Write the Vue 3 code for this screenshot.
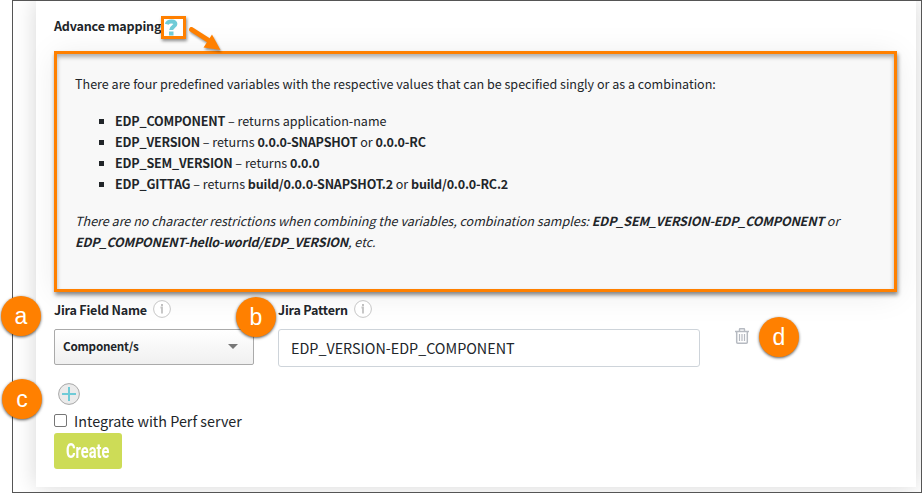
<script setup>
const variables = [
  { name: 'EDP_COMPONENT', parts: [{ text: 'application-name' }] },
  { name: 'EDP_VERSION', parts: [{ text: '0.0.0-SNAPSHOT', bold: true }, { text: ' or ' }, { text: '0.0.0-RC', bold: true }] },
  { name: 'EDP_SEM_VERSION', parts: [{ text: '0.0.0', bold: true }] },
  { name: 'EDP_GITTAG', parts: [{ text: 'build/0.0.0-SNAPSHOT.2', bold: true }, { text: ' or ' }, { text: 'build/0.0.0-RC.2', bold: true }] },
]
const markers = ['a', 'b', 'c', 'd']
</script>

<template>
  <div class="frame">
    <main class="panel">
      <header class="heading">
        <span class="title">Advance mapping</span>
        <span class="help">
          <svg width="19" height="17" viewBox="0 0 19 17">
            <path d="M1.800 5.200C2.300 3 4 2.400 6.500 2.400c2.700 0 3.900 1.100 3.900 2.700 0 2.700-4.200 2.500-4.200 6" fill="none" stroke="#6fcbd7" stroke-width="4" />
            <rect x="4" y="12.500" width="4.500" height="4" fill="#6fcbd7" />
          </svg>
        </span>
      </header>

      <section class="callout">
        <p class="intro">There are four predefined variables with the respective values that can be specified singly or as a combination:</p>
        <ul class="vars">
          <li v-for="v in variables" :key="v.name"><b>{{ v.name }}</b> – returns <template v-for="(p, i) in v.parts" :key="i"><b v-if="p.bold">{{ p.text }}</b><template v-else>{{ p.text }}</template></template></li>
        </ul>
        <p class="note">There are no character restrictions when combining the variables, combination samples: <b>EDP_SEM_VERSION-EDP_COMPONENT</b> or<br /><b>EDP_COMPONENT-hello-world/EDP_VERSION</b>, etc.</p>
      </section>

      <section class="fields">
        <div class="field name">
          <div class="label"><span>Jira Field Name</span>
            <svg class="info" width="18" height="18" viewBox="0 0 18 18"><circle cx="9" cy="9" r="8.400" fill="#fff" stroke="#c6c6c6" /><path d="M7.500 7.500H9V13.500" fill="none" stroke="#c2c2c2" stroke-width="1.800" /><rect x="8" y="4" width="2" height="2" fill="#c2c2c2" /></svg>
          </div>
          <div class="select"><span>Component/s</span><i class="caret"></i></div>
        </div>
        <div class="field pattern">
          <div class="label"><span>Jira Pattern</span>
            <svg class="info" width="18" height="18" viewBox="0 0 18 18"><circle cx="9" cy="9" r="8.400" fill="#fff" stroke="#c6c6c6" /><path d="M7.500 7.500H9V13.500" fill="none" stroke="#c2c2c2" stroke-width="1.800" /><rect x="8" y="4" width="2" height="2" fill="#c2c2c2" /></svg>
          </div>
          <div class="input"><span>EDP_VERSION-EDP_COMPONENT</span></div>
        </div>
        <svg class="trash" width="14" height="16" viewBox="0 0 14 16" fill="none" stroke="#b6bac1">
          <path d="M0 3.500H14M4.500 3V1.200Q4.500.7 5 .7H9Q9.500.7 9.500 1.200V3" stroke-width="1.400" />
          <path d="M1.700 4V14.200Q1.700 15.200 2.700 15.200H11.300Q12.300 15.200 12.300 14.200V4" stroke-width="1.500" />
          <path d="M4.500 6V13M7 6V13M9.500 6V13" stroke-width="1.200" />
        </svg>
      </section>

      <svg class="add" width="22" height="22" viewBox="0 0 22 22">
        <circle cx="11" cy="11" r="10.400" fill="#ebebeb" stroke="#a8a8a8" />
        <path d="M4 11H18M11 4V18" stroke="#6fcbd7" stroke-width="2" />
      </svg>
      <label class="check"><i class="box"></i><span>Integrate with Perf server</span></label>
      <button class="create"><span>Create</span></button>
    </main>

    <svg class="arrow" width="38" height="32" viewBox="0 0 38 32">
      <path d="M6.500 5.500L23 16" stroke="#ff8000" stroke-width="5" stroke-linecap="round" />
      <path d="M27 10.500L35.500 26L18.500 23.500Z" fill="#ff8000" />
    </svg>
    <span v-for="m in markers" :key="m" class="marker" :class="m">{{ m }}</span>
  </div>
</template>

<style>
body { margin: 0; background: #fff; }
</style>

<style scoped>
* { box-sizing: border-box; }
.frame {
  position: relative;
  width: 922px;
  height: 493px;
  overflow: hidden;
  padding-left: 36px;
  font-family: "Noto Sans CJK SC", "Noto Sans", sans-serif;
  font-size: 12.55px;
  color: #212529;
}
.frame::after {
  content: "";
  position: absolute;
  inset: 0 0 0 12px;
  border: 1px solid #555;
}
.panel {
  width: 880px;
  height: 487px;
  padding: 16px 18px 0;
  background: #fff;
  box-shadow: 0 0 22px rgba(0, 0, 0, .16);
}
.heading { display: flex; height: 35px; }
.title { width: 107px; line-height: 20px; font-weight: 600; letter-spacing: -.18px; white-space: nowrap; }
.help { width: 25px; height: 23px; border: 3px solid #ff8000; box-shadow: 1px 2px 3px rgba(0, 0, 0, .45); }
.help svg { display: block; margin-left: 1px; }
.callout {
  width: 843px;
  height: 241px;
  padding: 19px 18px 0;
  border: 3px solid #ff8000;
  background: #f8f8f8;
  box-shadow: 1px 3px 4px rgba(0, 0, 0, .45), 0 3px 30px rgba(0, 0, 0, .08), inset 0 3px 4px rgba(0, 0, 0, .3);
  line-height: 21px;
  white-space: nowrap;
}
b { font-weight: 600; letter-spacing: -.19px; }
.callout p { margin: 0; }
.vars { margin: 16px 0; padding: 0 0 0 40px; list-style: none; }
.vars li { display: flex; white-space: pre; align-items: center; }
.vars li::before { content: ""; width: 5px; height: 5px; margin: 1px 11px 0 -16px; background: #212529; }
.note { font-style: italic; }
.fields { display: flex; height: 91px; padding-top: 7px; }
.name { width: 200px; margin-right: 24px; }
.pattern { width: 422px; }
.label { display: flex; align-items: center; gap: 6px; height: 20px; margin-bottom: 10px; font-weight: 600; letter-spacing: -.19px; }
.select {
  display: flex;
  align-items: center;
  justify-content: space-between;
  height: 36px;
  padding: 0 15px 2px 8px;
  border: 1px solid #aaa;
  border-radius: 2px;
  background: linear-gradient(#fff, #f0f0f0);
  font-size: 11.7px;
  font-weight: 600;
  letter-spacing: -.22px;
}
.select span { padding-bottom: 2px; }
.caret { border: 5px solid transparent; border-top-color: #777; border-bottom: 0; }
.input { display: flex; align-items: center; height: 38px; padding: 0 0 2px 12px; border: 1px solid #ced4da; border-radius: 3px; font-size: 14.35px; }
.trash { margin: 29px 0 0 35px; }
.add { display: block; margin-left: 4px; }
.check { display: flex; align-items: center; height: 28px; font-size: 14.35px; }
.check span { padding-top: 2px; }
.box { width: 13px; height: 13px; margin: 2px 7px 0 0; border: 1px solid #767676; border-radius: 2px; background: #fff; }
.create {
  display: block;
  width: 68px;
  height: 36px;
  padding: 0;
  border: 0;
  border-radius: 3px;
  background: #cddc57;
  color: #fff;
  font: 700 20px Roboto, sans-serif;
}
.create span { display: inline-block; margin: 0 -6px; transform: scaleX(.73); }
.arrow { position: absolute; left: 185px; top: 24px; filter: drop-shadow(1px 2px 1px rgba(0, 0, 0, .4)); }
.marker {
  position: absolute;
  z-index: 2;
  width: 40px;
  height: 40px;
  border-radius: 50%;
  background: #ff8000;
  box-shadow: 0 1px 3px rgba(0, 0, 0, .65);
  color: #fff;
  font: 23px/40px "Liberation Sans", sans-serif;
  text-align: center;
}
.a { left: 1px; top: 296px; }
.b { left: 236px; top: 297px; }
.c { left: 2px; top: 379px; }
.d { left: 759px; top: 317px; }
</style>
